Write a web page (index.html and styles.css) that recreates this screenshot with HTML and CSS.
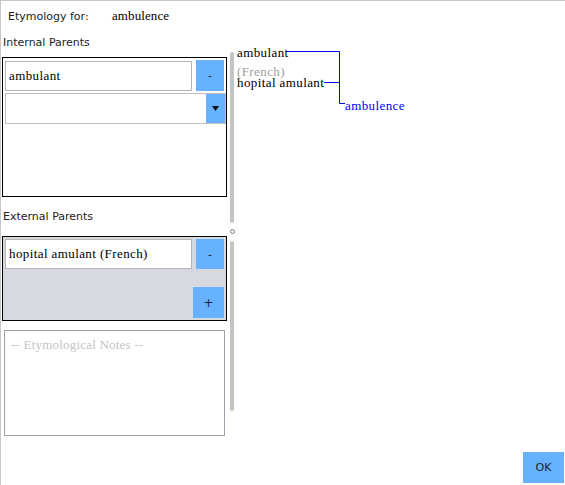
FILE: index.html
```html
<!DOCTYPE html>
<html>
<head>
<meta charset="utf-8">
<link rel="stylesheet" href="styles.css">
</head>
<body>
<div class="window">
  <header class="head">
    <span class="head-label">Etymology for:</span>
    <span class="head-word">ambulence</span>
  </header>
  <div class="main">
    <div class="left">
      <div class="sec-label">Internal Parents</div>
      <div class="box box-internal">
        <div class="row">
          <div class="field field-int">ambulant</div>
          <div class="btn btn-minus">-</div>
        </div>
        <div class="combo">
          <div class="combo-text"></div>
          <div class="combo-arrow">
            <svg width="7" height="5" viewBox="0 0 7 5"><polygon points="0,0 7,0 3.5,5" fill="#111"/></svg>
          </div>
        </div>
      </div>
      <div class="sec-label sec-ext">External Parents</div>
      <div class="box box-external">
        <div class="row">
          <div class="field">hopital amulant (French)</div>
          <div class="btn btn-minus btn-minus-ext">-</div>
        </div>
        <div class="add-row">
          <div class="btn btn-plus">+</div>
        </div>
      </div>
      <div class="notes">-- Etymological Notes --</div>
    </div>
    <div class="divider">
      <div class="bar bar1"></div>
      <div class="knob"></div>
      <div class="bar bar2"></div>
    </div>
    <div class="tree">
      <svg class="tree-svg" width="330" height="400" viewBox="0 0 330 400">
        <path d="M52 16.5 H104.5 V68.5 H110" fill="none" stroke="#0000ff" stroke-width="1"/>
        <path d="M89 47.5 H104.5" fill="none" stroke="#0000ff" stroke-width="1"/>
        <text x="2" y="22" class="t-node">ambulant</text>
        <text x="2" y="41" class="t-lang">(French)</text>
        <text x="2" y="52" class="t-node">hopital amulant</text>
        <text x="110" y="75" class="t-target">ambulence</text>
      </svg>
    </div>
  </div>
  <footer class="foot">
    <div class="btn btn-ok">OK</div>
  </footer>
</div>
</body>
</html>
```

FILE: styles.css
```css
html, body {
  margin: 0;
  padding: 0;
  background: #fff;
}

.window {
  width: 565px;
  height: 485px;
  box-sizing: border-box;
  border-top: 1px solid #c8c8c8;
  border-left: 1px solid #c8c8c8;
  overflow: hidden;
  background: #fff;
  font-family: "DejaVu Sans", sans-serif;
  font-size: 11px;
  color: #222;
}

.head {
  height: 34px;
  box-sizing: border-box;
  padding: 7px 0 0 7px;
  display: flex;
  align-items: baseline;
  line-height: 16px;
}

.head-label {
  width: 104px;
  flex: none;
}

.head-word {
  font-family: "Liberation Serif", serif;
  font-size: 13px;
  letter-spacing: 0.1px;
  color: #000;
}

.main {
  display: flex;
  height: 402px;
}

.left {
  width: 226px;
  flex: none;
  display: flex;
  flex-direction: column;
}

.sec-label {
  line-height: 16px;
  height: 16px;
  padding-left: 2px;
}

.sec-ext {
  margin-top: 12px;
}

.box {
  margin-left: 1px;
  width: 225px;
  box-sizing: border-box;
  border: 1px solid #000;
  padding: 2px 0 0 2px;
}

.box-internal {
  margin-top: 6px;
  height: 140px;
}

.box-external {
  margin-top: 11px;
  height: 85px;
  background: #d6d9df;
}

.row {
  display: flex;
  align-items: flex-start;
  gap: 4px;
}

.field {
  width: 187px;
  height: 30px;
  box-sizing: border-box;
  border: 1px solid #b4b4b4;
  background: #fff;
  font-family: "Liberation Serif", serif;
  font-size: 13px;
  letter-spacing: 0.4px;
  line-height: 28px;
  padding-left: 3px;
  color: #000;
  white-space: nowrap;
}

.field-int {
  margin-top: 1px;
}

.btn {
  background: #66b2ff;
  display: flex;
  align-items: center;
  justify-content: center;
  color: #1c2230;
  font-family: "DejaVu Sans", sans-serif;
  font-size: 11px;
  flex: none;
}

.btn-minus {
  width: 28px;
  height: 31px;
}

.btn-minus-ext {
  height: 30px;
}

.combo {
  margin-top: 2px;
  width: 221px;
  height: 31px;
  box-sizing: border-box;
  border: 1px solid #c0c0c0;
  background: #fff;
  display: flex;
}

.combo-arrow {
  margin-left: auto;
  width: 19px;
  background: #66b2ff;
  display: flex;
  align-items: center;
  justify-content: center;
}

.add-row {
  display: flex;
  justify-content: flex-end;
  margin-top: 18px;
  padding-right: 2px;
}

.btn-plus {
  width: 31px;
  height: 31px;
  font-size: 12px;
}

.notes {
  margin: 9px 0 0 3px;
  width: 221px;
  height: 106px;
  box-sizing: border-box;
  border: 1px solid #9ba1ad;
  padding: 6px 0 0 6px;
  font-family: "Liberation Serif", serif;
  font-size: 13px;
  letter-spacing: 0.2px;
  line-height: 16px;
  color: #c4c4c4;
}

.divider {
  margin-left: 3px;
  width: 5px;
  flex: none;
  display: flex;
  flex-direction: column;
  align-items: flex-start;
  padding-top: 17px;
}

.bar {
  width: 4px;
  border-radius: 2px;
  background: #c4c4c4;
}

.bar1 {
  height: 171px;
}

.knob {
  margin-top: 6px;
  width: 5px;
  height: 5px;
  box-sizing: border-box;
  border: 1px solid #7a7a7a;
  border-radius: 50%;
}

.bar2 {
  margin-top: 7px;
  height: 170px;
}

.tree {
  flex: 1;
}

.tree-svg {
  display: block;
}

.t-node, .t-lang, .t-target {
  font-family: "Liberation Serif", serif;
  font-size: 13px;
  letter-spacing: 0.4px;
}

.t-node {
  fill: #000;
}

.t-lang {
  fill: #a0a0a0;
}

.t-target {
  fill: #0000ff;
}

.foot {
  display: flex;
  justify-content: flex-end;
  padding: 15px 1px 0 0;
}

.btn-ok {
  width: 41px;
  height: 31px;
}
```
